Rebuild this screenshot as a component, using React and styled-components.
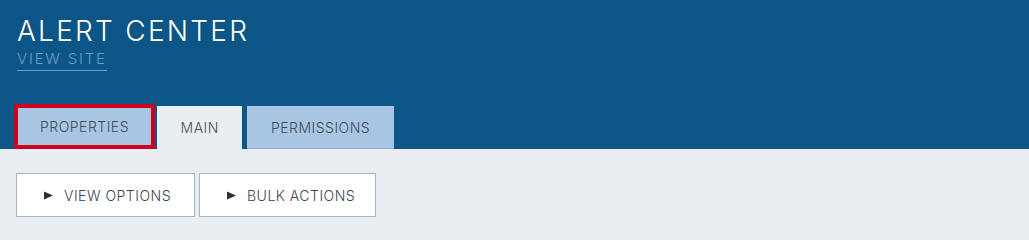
import React from "react";
import styled, { createGlobalStyle } from "styled-components";

const Global = createGlobalStyle`
  html, body { margin: 0; padding: 0; background: #e9eef2; }
  body { font-family: Inter, "Noto Sans", sans-serif; }
  * { box-sizing: border-box; }
`;

const Header = styled.header`
  background: #0c5587;
  height: 149px;
  display: flex;
  flex-direction: column;
  padding: 14px 0 0 17px;
`;

const Title = styled.h1`
  margin: 0;
  font-size: 28px;
  line-height: 34px;
  font-weight: 300;
  color: #ffffff;
  letter-spacing: 2.25px;
`;

const SiteLink = styled.a`
  align-self: flex-start;
  margin-top: 2px;
  font-size: 15px;
  font-weight: 300;
  line-height: 18px;
  letter-spacing: 1.8px;
  color: #6a9cc7;
  text-decoration: none;
  border-bottom: 1px solid #6a9cc7;
  padding-bottom: 2px;
`;

const Tabs = styled.nav`
  margin-top: auto;
  margin-left: -3px;
  display: flex;
  align-items: flex-end;
`;

const Tab = styled.div`
  height: ${(p) => (p.$focused ? "45px" : "43px")};
  padding: 0 ${(p) => (p.$focused ? "22px" : "23.5px")};
  margin-right: ${(p) => (p.$focused ? "2px" : "5px")};
  display: flex;
  align-items: center;
  font-size: 14px;
  font-weight: 300;
  letter-spacing: 0.5px;
  color: ${(p) => (p.$active ? "#4a4f57" : "#3f4b5c")};
  background: ${(p) => (p.$active ? "#e9eef2" : "#a8c5e3")};
  border: ${(p) => (p.$focused ? "4px solid #d0021b" : "none")};
  border-bottom: ${(p) =>
    p.$focused ? "4px solid #d0021b" : p.$active ? "none" : "1px solid #8ea9c9"};
`;

const Toolbar = styled.div`
  display: flex;
  gap: 4px;
  padding: 24px 16px 0;
`;

const Button = styled.button`
  height: 44px;
  width: ${(p) => p.$w}px;
  padding: 0 0 0 27px;
  display: flex;
  align-items: center;
  gap: 11px;
  background: #ffffff;
  border: 1px solid #a8b4c3;
  font-family: Inter, "Noto Sans", sans-serif;
  font-size: 14px;
  font-weight: 300;
  letter-spacing: 0.5px;
  color: #3a4453;
  cursor: pointer;
`;

const Arrow = styled.svg`
  width: 9px;
  height: 9px;
  flex: none;
`;

export default function App() {
  return (
    <>
      <Global />
      <Header>
        <Title>ALERT CENTER</Title>
        <SiteLink href="#">VIEW SITE</SiteLink>
        <Tabs>
          <Tab $focused>PROPERTIES</Tab>
          <Tab $active>MAIN</Tab>
          <Tab>PERMISSIONS</Tab>
        </Tabs>
      </Header>
      <Toolbar>
        {[
          ["VIEW OPTIONS", 179],
          ["BULK ACTIONS", 177],
        ].map(([label, w]) => (
          <Button key={label} $w={w}>
            <Arrow viewBox="0 0 9 9">
              <polygon points="0,0.5 9,4.5 0,8.5" fill="#2b2f36" />
            </Arrow>
            {label}
          </Button>
        ))}
      </Toolbar>
    </>
  );
}
